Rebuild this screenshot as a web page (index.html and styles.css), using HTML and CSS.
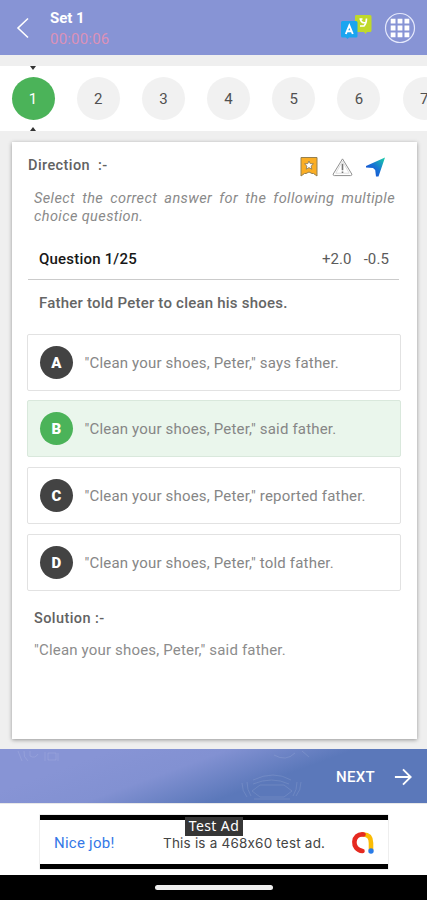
FILE: index.html
```html
<!DOCTYPE html>
<html lang="en">
<head>
<meta charset="utf-8">
<meta name="viewport" content="width=device-width">
<title>Set 1</title>
<link rel="stylesheet" href="styles.css">
</head>
<body>
<div class="app">
  <header class="topbar">
    <svg class="back" viewBox="0 0 14 22"><path d="M12 1.500 2 11l10 9.500"/></svg>
    <div class="heading">
      <div class="title">Set 1</div>
      <div class="timer"><span>00:00:06</span></div>
    </div>
    <svg class="translate" viewBox="0 0 30 24">
      <path fill="#c0d92b" d="M15 0h14q1.500 0 1.500 1.500v14q0 1.500-1.500 1.500h-3l-1.500 2-1.500-2h-9V1.500Q14 0 15 0z"/>
      <path fill="#1aa5f0" d="M1.500 6H15q1.500 0 1.500 1.500v13.500q0 1.500-1.500 1.500H8l-1.500 1.500-1.500-1.500H1.500Q0 22.500 0 21V7.500Q0 6 1.500 6z"/>
      <path class="glyph" d="M4.800 19 8.300 10.500 11.800 19M6 16.200h4.600"/>
      <path class="glyph thin" d="M18.500 4h3M19.500 4.500q1 4 5 3M25.500 3.500q0 5-2.500 7.500h-4"/>
    </svg>
    <svg class="menu" viewBox="0 0 32 32">
      <circle cx="16" cy="16" r="14.500" fill="none" stroke="#e4e8fb" stroke-width="1.200"/>
      <path fill="#fff" d="M6.700 6.700h4.800v4.800H6.700zM13.600 6.700h4.800v4.800h-4.800zM20.500 6.700h4.800v4.800h-4.800zM6.700 13.600h4.800v4.800H6.700zM13.600 13.600h4.800v4.800h-4.800zM20.500 13.600h4.800v4.800h-4.800zM6.700 20.500h4.800v4.800H6.700zM13.600 20.500h4.800v4.800h-4.800zM20.500 20.500h4.800v4.800h-4.800z"/>
    </svg>
  </header>
  <nav class="pager">
    <span class="page current">1</span><span class="page">2</span><span class="page">3</span><span class="page">4</span><span class="page">5</span><span class="page">6</span><span class="page">7</span>
  </nav>
  <main class="card">
    <div class="direction">
      <h2><span class="dir-label">Direction</span> :-</h2>
      <div class="tools">
        <svg viewBox="0 0 20 22"><path d="M1.500 1.500h16v18.500l-3.500-2.500h-1.500L9.500 16l-3 1.500H5L1.500 20z" fill="#fbae24" stroke="#96804e"/><path d="m9.500 5 1.200 2.600 3.200.3-2.300 2.200.7 3.100-2.800-1.600-2.800 1.600.7-3.100-2.300-2.200 3.200-.3z" fill="#fff" stroke="#807357" stroke-width=".8"/></svg>
        <svg viewBox="0 0 22 22"><path d="M11 2.500 20.800 18.500Q21 20 19.500 20h-17Q1 20 1.200 18.500z" fill="none" stroke="#8b8b8b"/><path d="M11 5 4 17.500h14z" fill="none" stroke="#cfcfcf" stroke-width=".7"/><path d="M11 7.500v7m0 1.200v1.700" fill="none" stroke="#777" stroke-width="1.700"/></svg>
        <svg viewBox="0 0 20 22"><defs><linearGradient id="plane" x1="0" y1="1" x2="1" y2="0"><stop offset="0" stop-color="#1742d1"/><stop offset=".5" stop-color="#1772d4"/><stop offset="1" stop-color="#19d1a6"/></linearGradient></defs><path d="M19.500 1.500 13 20.500h-2.500l-.8-6.500L7.500 12 .5 11.500V10z" fill="url(#plane)"/></svg>
      </div>
    </div>
    <p class="instructions"><span class="line-one">Select the correct answer for the following multiple</span><span class="line-two">choice question.</span></p>
    <div class="qhead"><span class="number">Question 1/25</span><span class="marks"><span>+2.0</span><span>-0.5</span></span></div>
    <p class="question">Father told Peter to clean his shoes.</p>
    <ul class="options">
      <li><b>A</b><span>"Clean your shoes, Peter," says father.</span></li>
      <li class="correct"><b>B</b><span>"Clean your shoes, Peter," said father.</span></li>
      <li><b>C</b><span>"Clean your shoes, Peter," reported father.</span></li>
      <li><b>D</b><span>"Clean your shoes, Peter," told father.</span></li>
    </ul>
    <h3>Solution :-</h3>
    <p class="answer">"Clean your shoes, Peter," said father.</p>
  </main>
  <footer class="nextbar">
    <svg class="pattern" viewBox="0 0 427 54" fill="none">
      <path d="M18 2l4 10M24 2q-1 6 4 10M30 2v5q5 3 8-2M48 4h8v7h-8zM45 3v9M58 4v8"/>
      <path d="M242 34q0 8 5 14M247 33q0 8 4 14M253 31q21-10 38 0M253 35q19-8 36 0M252 42l8-6h24l8 6-8 6h-24zM254 50h36M301 33q0 8-5 14M297 33q0 8-4 14M274 6q12 7 21-2M302 2l7 6"/>
    </svg>
    <span class="next">NEXT</span>
    <svg class="arrow" viewBox="0 0 20 20"><path d="M1 10h17M10 1.500 18.500 10 10 18.500"/></svg>
  </footer>
  <section class="ad">
    <div class="banner">
      <span class="nice">Nice job!</span><span class="copy">This is a 468x60 test ad.</span>
      <svg class="logo" viewBox="0 0 24 24" fill="none" stroke-linecap="round" stroke-width="4.600"><path d="M12.500 3.500Q20 3.500 20 12v7" stroke="#fbbc04"/><path d="M12.500 3.500C1 2 0 19 11.500 20" stroke="#e52a20"/><circle cx="20" cy="20" r="2.700" fill="#287be8" stroke="none"/></svg>
      <span class="tag">Test Ad</span>
    </div>
  </section>
  <div class="system"><span class="handle"></span></div>
</div>
</body>
</html>
```
FILE: styles.css
```css
* { box-sizing: border-box; }
body { margin: 0; font-family: Roboto, "Liberation Sans", sans-serif; }
h2, h3, p, ul { margin: 0; padding: 0; }
svg { display: block; flex: none; }
.app { width: 427px; height: 900px; overflow: hidden; background: #efefef; display: flex; flex-direction: column; }
.topbar { height: 55px; flex: none; background: #8794d5; display: flex; align-items: center; padding: 0 11px 0 16px; }
.back { width: 14px; height: 22px; fill: none; stroke: #fff; stroke-width: 1.6; }
.heading { margin-left: 20px; flex: 1; color: #fff; }
.title { font-size: 15px; line-height: 20px; font-weight: 700; letter-spacing: -.05px; padding-top: 1px; }
.timer { font-size: 15px; line-height: 20px; color: #dc91b8; letter-spacing: .2px; padding-top: 1px; }
.translate { width: 30px; height: 24px; margin: -2px 13px 0 0; overflow: visible; }
.glyph { fill: none; stroke: #fff; stroke-width: 1.9; }
.glyph.thin { stroke-width: 1.6; }
.menu { width: 32px; height: 32px; margin: 1px 0 0; }
.pager { height: 65px; flex: none; margin-top: 11px; background: #fff; display: flex; align-items: center; gap: 22.2px; padding-left: 11.5px; overflow: hidden; }
.page { position: relative; flex: none; width: 43px; height: 43px; border-radius: 50%; background: #f1f1f1; color: #505050; font-size: 15px; line-height: 45px; text-align: center; }
.current { background: #4bb359; color: #fff; }
.current::before, .current::after { content: ""; position: absolute; left: 18.5px; border: 3px solid transparent; }
.current::before { top: -11px; border-top: 4px solid #333; border-bottom: 0; }
.current::after { bottom: -11px; border-bottom: 4px solid #333; border-top: 0; }
.card { margin: 11px 10px 0 12px; height: 597px; flex: none; background: #fff; box-shadow: 0 1px 4px rgba(0,0,0,.38); padding: 13px 16px 0 15px; }
.direction { height: 24px; display: flex; justify-content: space-between; align-items: flex-start; padding: 0 15px 0 1px; }
h2, h3 { font-size: 14.5px; line-height: 20px; font-weight: 500; color: #626262; letter-spacing: .42px; }
h2 { padding-top: 1px; }
.dir-label { margin-right: 4px; }
.tools { display: flex; gap: 12px; }
.tools svg { width: 21px; height: 22px; margin-top: 1px; }
.instructions { margin: 11px 6px 0 7px; font-size: 14.5px; line-height: 18px; font-style: italic; color: #8a8a8a; }
.line-one, .line-two { display: block; letter-spacing: .4px; white-space: nowrap; }
.line-one { text-align-last: justify; }
.qhead { height: 44px; margin: 10px 2px 0 1px; border-bottom: 1px solid #cbcbcb; display: flex; align-items: center; justify-content: space-between; padding: 2px 10px 0 11px; font-size: 15px; }
.number { font-weight: 500; color: #171717; letter-spacing: .2px; }
.marks { display: flex; gap: 12px; color: #5b5b5b; letter-spacing: .1px; }
.question { margin: 13px 0 0 12px; font-size: 15px; line-height: 20px; font-weight: 500; color: #656565; letter-spacing: .22px; white-space: nowrap; }
.options { margin-top: 20.5px; list-style: none; display: grid; gap: 9.7px; }
.options li { height: 57px; border: 1px solid #e2e2e2; border-radius: 2px; display: flex; align-items: center; padding-left: 12px; white-space: nowrap; color: #868686; font-size: 15px; letter-spacing: .18px; }
.options b { width: 33px; height: 33px; border-radius: 50%; background: #434343; color: #fff; font-size: 15px; font-weight: 900; line-height: 34px; text-align: center; margin-right: 11.5px; }
.options li span { padding-top: 1px; }
.options .correct { background: #eaf6ec; border-color: #d9e8dc; }
.options .correct b { background: #4bb359; }
h3 { margin: 18px 0 0 7px; }
.answer { margin: 11px 0 0 7px; font-size: 15px; line-height: 20px; color: #8c8c8c; letter-spacing: .18px; }
.nextbar { position: relative; height: 54px; flex: none; margin-top: 10px; background: linear-gradient(160deg, #8794d5 20%, #8291d2 40%, #5b78ba 62%, #5b78ba); color: #fff; display: flex; align-items: center; justify-content: flex-end; padding: 1px 15px 0 0; }
.pattern { position: absolute; left: 0; top: 0; width: 427px; height: 54px; stroke: rgba(255,255,255,.11); }
.next { font-size: 15px; font-weight: 500; letter-spacing: .3px; margin-right: 19px; padding-top: 1px; }
.arrow { width: 18px; height: 18px; fill: none; stroke: #fff; stroke-width: 2.1; }
.ad { height: 72px; flex: none; background: #fff; padding: 11px 39px 0 40px; border-top: 1px solid #e8e8e8; }
.banner { position: relative; height: 54px; border-top: 5px solid #000; border-bottom: 5px solid #000; box-shadow: 0 0 0 .5px #ddd; display: flex; align-items: center; padding: 1px 13px 0 14px; font-size: 15px; }
.nice { color: #3478e7; width: 109px; letter-spacing: .25px; }
.copy { color: #444; font-family: Inter, Roboto, sans-serif; font-size: 13.5px; line-height: 14px; letter-spacing: .2px; white-space: nowrap; padding-top: 1px; }
.logo { width: 24px; height: 24px; margin-left: auto; }
.tag { position: absolute; left: 145px; top: -3px; width: 58px; height: 19px; background: #363636; color: #fff; font: 14px/18px "Noto Sans", sans-serif; letter-spacing: .4px; text-align: center; white-space: nowrap; }
.system { height: 25px; flex: none; background: #000; display: flex; justify-content: center; padding-top: 10px; }
.handle { width: 118px; height: 5px; border-radius: 3px; background: #eee; }
```
